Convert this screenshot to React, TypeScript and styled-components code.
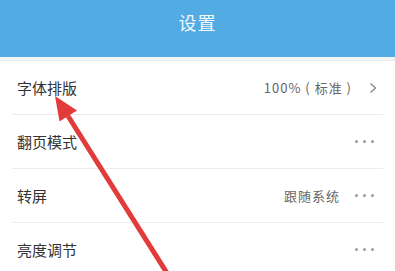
import React from "react";
import styled, { createGlobalStyle } from "styled-components";

const GlobalStyle = createGlobalStyle`
    html, body {
        margin: 0;
        padding: 0;
        background: #fff;
    }
    body {
        font-family: "Noto Sans CJK SC", "Noto Sans", sans-serif;
    }
`;

type Item = {
    label: string;
    value?: string;
    action: "chevron" | "more";
};

const items: Item[] = [
    { label: "字体排版", value: "100% ( 标准 )", action: "chevron" },
    { label: "翻页模式", action: "more" },
    { label: "转屏", value: "跟随系统", action: "more" },
    { label: "亮度调节", action: "more" },
];

const App = () => {
    return (
        <Page>
            <GlobalStyle />
            <Header>设置</Header>
            <Gap />
            <List>
                {items.map((item) => (
                    <Row key={item.label}>
                        <Label>{item.label}</Label>
                        <Right>
                            {item.value ? <Value>{item.value}</Value> : null}
                            {item.action === "chevron" ? (
                                <Chevron viewBox="0 0 8 12">
                                    <path d="M1.5 1.5 L6.5 6 L1.5 10.5" fill="none" stroke="#8a8a8a" strokeWidth="1.4" />
                                </Chevron>
                            ) : (
                                <Dots>
                                    <Dot />
                                    <Dot />
                                    <Dot />
                                </Dots>
                            )}
                        </Right>
                    </Row>
                ))}
            </List>
            <Arrow viewBox="0 0 395 271">
                <line x1="68" y1="116" x2="172" y2="281" stroke="#e23b3b" strokeWidth="5" />
                <polygon points="55,96 59.5,121.5 77,110.5" fill="#e23b3b" />
            </Arrow>
        </Page>
    );
};
export default App;

const Page = styled.div`
    position: relative;
    width: 395px;
    height: 271px;
    overflow: hidden;
    background: #fff;
`;

const Header = styled.div`
    display: flex;
    justify-content: center;
    align-items: center;
    height: 57px;
    padding-bottom: 14px;
    box-sizing: border-box;
    background: #53abe4;
    color: #f4f9fd;
    font-size: 18px;
    letter-spacing: 1px;
`;

const Gap = styled.div`
    height: 3px;
    background: #f3f4f5;
    border-bottom: 1px solid #ececec;
`;

const List = styled.div`
    display: flex;
    flex-direction: column;
    padding: 0 12px;
`;

const Row = styled.div`
    display: flex;
    justify-content: space-between;
    align-items: center;
    height: 53px;
    padding: 0 8px 0 5px;
    border-bottom: 1px solid #ebebeb;
`;

const Label = styled.div`
    color: #333;
    font-size: 15px;
`;

const Right = styled.div`
    display: flex;
    align-items: center;
    gap: 14px;
`;

const Value = styled.div`
    color: #666;
    font-size: 13px;
    letter-spacing: 1px;
    white-space: pre;
`;

const Chevron = styled.svg`
    width: 8px;
    height: 12px;
    margin-left: 3px;
    margin-right: -2px;
`;

const Dots = styled.div`
    display: flex;
    gap: 5px;
    padding: 0 1px;
`;

const Dot = styled.span`
    width: 3px;
    height: 3px;
    border-radius: 50%;
    background: #9a9a9a;
`;

const Arrow = styled.svg`
    position: absolute;
    left: 0;
    top: 0;
    width: 395px;
    height: 271px;
    pointer-events: none;
`;
